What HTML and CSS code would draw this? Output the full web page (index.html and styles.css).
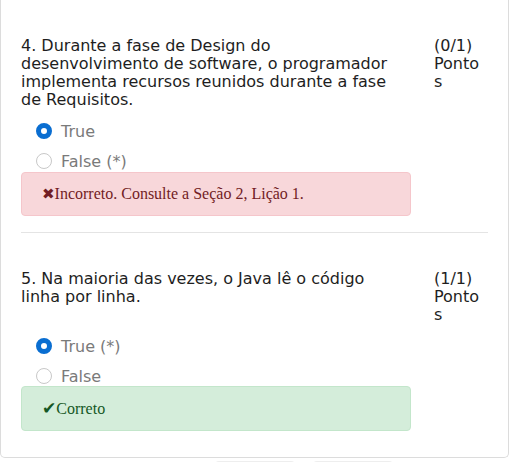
FILE: index.html
```html
<!DOCTYPE html>
<html lang="pt">
<head>
<meta charset="utf-8">
<link rel="stylesheet" href="styles.css">
</head>
<body>
<div class="card">
  <div class="question">
    <div class="q-row">
      <div class="q-text">4. Durante a fase de Design do desenvolvimento de software, o programador implementa recursos reunidos durante a fase de Requisitos.</div>
      <div class="q-points">(0/1) Pontos</div>
    </div>
    <div class="options">
      <div class="option"><span class="radio checked"></span><span class="opt-label">True</span></div>
      <div class="option"><span class="radio"></span><span class="opt-label">False (*)</span></div>
    </div>
    <div class="alert alert-danger"><span class="icon">✖</span>Incorreto. Consulte a Seção 2, Lição 1.</div>
  </div>
  <hr class="divider">
  <div class="question">
    <div class="q-row">
      <div class="q-text">5. Na maioria das vezes, o Java lê o código linha por linha.</div>
      <div class="q-points">(1/1) Pontos</div>
    </div>
    <div class="options">
      <div class="option"><span class="radio checked"></span><span class="opt-label">True (*)</span></div>
      <div class="option"><span class="radio"></span><span class="opt-label">False</span></div>
    </div>
    <div class="alert alert-success"><span class="icon check">✔</span>Correto</div>
  </div>
</div>
<div class="buttons">
  <div class="btn"></div>
  <div class="btn"></div>
</div>
</body>
</html>
```

FILE: styles.css
```css
html, body {
  margin: 0;
  padding: 0;
  background: #fff;
}
body {
  font-family: "DejaVu Sans", Verdana, sans-serif;
  font-size: 16px;
  color: #1e1e1e;
}
.card {
  width: 509px;
  box-sizing: border-box;
  border: 1px solid #dcdcdc;
  border-top: none;
  border-radius: 0 0 5px 5px;
  padding: 0 20px 26px 20px;
}
.question {
  padding-top: 37px;
}
.q-row {
  display: flex;
  line-height: 18px;
}
.q-text {
  width: 375px;
}
.q-points {
  width: 50px;
  margin-left: 38px;
  word-break: break-all;
}
.options {
  margin-top: 10px;
  padding-left: 15px;
}
.option {
  display: flex;
  align-items: center;
  height: 24px;
  margin-bottom: 6px;
  color: #7a7a7a;
}
.option:last-child {
  margin-bottom: -1px;
}
.radio {
  width: 16px;
  height: 16px;
  box-sizing: border-box;
  border-radius: 50%;
  border: 1px solid #c8c8c8;
  background: #fff;
  margin-right: 9px;
  flex: none;
}
.radio.checked {
  border: 5px solid #0a6ed1;
  background: #fff;
}
.alert {
  width: 390px;
  box-sizing: border-box;
  border-radius: 4px;
  border: 1px solid;
  padding: 12px 20px;
  font-family: "Liberation Serif", "Times New Roman", serif;
  font-size: 16px;
  line-height: 18px;
}
.alert-danger {
  background: #f8d7da;
  border-color: #f5c6cb;
  color: #721c24;
}
.alert-success {
  background: #d4edda;
  border-color: #c3e6cb;
  color: #155724;
  margin-top: -2px;
}
.icon {
  font-family: "DejaVu Sans", sans-serif;
  font-size: 15px;
}
.icon.check {
  font-size: 17px;
}
.divider {
  border: none;
  border-top: 1px solid #e4e4e4;
  margin: 16px 0 0 0;
}
.buttons {
  display: flex;
  gap: 18px;
  padding-left: 215px;
  margin-top: 3px;
}
.btn {
  width: 80px;
  height: 10px;
  border-top: 1px solid #eee;
  border-radius: 4px;
  background: #fafafa;
}
```
